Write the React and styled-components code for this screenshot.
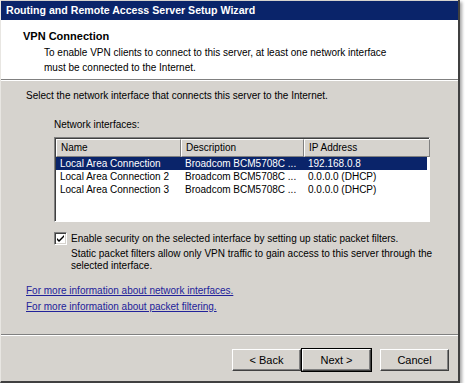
import React from "react";
import styled, { createGlobalStyle } from "styled-components";

const COLORS = {
  titleBar: "#0a246a",
  face: "#d6d3ce",
  shadow: "#808080",
  darkShadow: "#404040",
  highlight: "#ffffff",
  link: "#22229a",
  text: "#000000",
};

const GlobalStyle = createGlobalStyle`
  html, body {
    margin: 0;
    padding: 0;
    background: #ffffff;
  }
  body {
    font-family: "Liberation Sans", Arial, sans-serif;
    font-size: 10px;
    color: ${COLORS.text};
  }
`;

const Window = styled.div`
  width: 460px;
  height: 383px;
  display: flex;
  flex-direction: column;
  background: ${COLORS.face};
  border-left: 1px solid #e8e6e2;
  border-right: 2px solid ${COLORS.darkShadow};
  border-bottom: 2px solid ${COLORS.darkShadow};
  box-shadow: 2px 2px 3px rgba(0, 0, 0, 0.35);
  box-sizing: border-box;
`;

const TitleBar = styled.div`
  height: 19px;
  margin-top: 1px;
  background: ${COLORS.titleBar};
  color: #ffffff;
  font-weight: bold;
  font-size: 10.6px;
  line-height: 19px;
  padding-left: 5px;
`;

const Header = styled.div`
  background: #ffffff;
  height: 60px;
  padding: 9px 0 0 22px;
  box-sizing: border-box;
  border-bottom: 1px solid ${COLORS.shadow};
  box-shadow: 0 1px 0 ${COLORS.highlight};
`;

const HeaderTitle = styled.div`
  font-weight: bold;
  font-size: 11px;
  line-height: 14px;
`;

const HeaderText = styled.div`
  padding-left: 21px;
  margin-top: 2px;
  line-height: 15px;
`;

const Body = styled.div`
  flex: 1;
  display: flex;
  flex-direction: column;
  padding: 9px 0 0 25px;
`;

const Paragraph = styled.div`
  line-height: 13px;
`;

const Section = styled.div`
  margin: 16px 0 0 28px;
`;

const ListBox = styled.div`
  width: 376px;
  height: 85px;
  margin-top: 6px;
  background: #ffffff;
  border-top: 1px solid ${COLORS.shadow};
  border-left: 1px solid ${COLORS.shadow};
  border-right: 1px solid ${COLORS.highlight};
  border-bottom: 1px solid ${COLORS.highlight};
  box-shadow: inset 1px 1px 0 ${COLORS.darkShadow};
  box-sizing: border-box;
  padding: 1px 2px 0 1px;
`;

const Columns = styled.div`
  display: grid;
  grid-template-columns: 125px 123px 126px;
`;

const HeaderCell = styled.div`
  height: 16px;
  line-height: 16px;
  padding-left: 4px;
  background: ${COLORS.face};
  border-top: 1px solid ${COLORS.highlight};
  border-left: 1px solid ${COLORS.highlight};
  border-right: 1px solid ${COLORS.shadow};
  border-bottom: 1px solid ${COLORS.shadow};
`;

const Row = styled.div`
  display: grid;
  grid-template-columns: 125px 123px 126px;
  height: 13px;
  line-height: 13px;
  background: ${(p) => (p.$selected ? COLORS.titleBar : "transparent")};
  color: ${(p) => (p.$selected ? "#ffffff" : COLORS.text)};
`;

const Rows = styled.div`
  margin-top: 0;
`;

const Cell = styled.div`
  padding-left: 4px;
  white-space: nowrap;
  overflow: hidden;
`;

const CheckRow = styled.div`
  display: flex;
  gap: 4px;
  margin-top: 10px;
`;

const CheckBox = styled.div`
  width: 13px;
  height: 13px;
  flex: none;
  box-sizing: border-box;
  background: #ffffff;
  border-top: 1px solid ${COLORS.shadow};
  border-left: 1px solid ${COLORS.shadow};
  border-right: 1px solid ${COLORS.highlight};
  border-bottom: 1px solid ${COLORS.highlight};
  box-shadow: inset 1px 1px 0 ${COLORS.darkShadow}, inset -1px -1px 0 ${COLORS.face};
  display: flex;
  align-items: center;
  justify-content: center;
`;

const CheckText = styled.div`
  line-height: 13px;
`;

const Note = styled.div`
  margin-top: 3px;
  line-height: 12px;
  width: 370px;
`;

const Links = styled.div`
  margin-top: 12px;
  display: flex;
  flex-direction: column;
  gap: 3px;
  align-items: flex-start;
`;

const Link = styled.a`
  color: ${COLORS.link};
  text-decoration: underline;
  line-height: 13px;
  cursor: pointer;
`;

const Footer = styled.div`
  margin-top: auto;
  border-top: 1px solid ${COLORS.shadow};
  box-shadow: inset 0 1px 0 ${COLORS.highlight};
  display: flex;
  justify-content: flex-end;
  padding: 14px 9px 10px 0;
`;

const Button = styled.button`
  width: 69px;
  height: 22px;
  font-family: inherit;
  font-size: 11px;
  color: ${COLORS.text};
  background: ${COLORS.face};
  box-sizing: border-box;
  padding: 0;
  margin-left: ${(p) => p.$gap || 0}px;
  border-top: 1px solid ${COLORS.highlight};
  border-left: 1px solid ${COLORS.highlight};
  border-right: 1px solid ${COLORS.darkShadow};
  border-bottom: 1px solid ${COLORS.darkShadow};
  box-shadow: inset -1px -1px 0 ${COLORS.shadow};
  outline: ${(p) => (p.$default ? `1px solid ${COLORS.text}` : "none")};
`;

const interfaces = [
  { name: "Local Area Connection", desc: "Broadcom BCM5708C ...", ip: "192.168.0.8" },
  { name: "Local Area Connection 2", desc: "Broadcom BCM5708C ...", ip: "0.0.0.0 (DHCP)" },
  { name: "Local Area Connection 3", desc: "Broadcom BCM5708C ...", ip: "0.0.0.0 (DHCP)" },
];

function CheckMark() {
  return (
    <svg width="9" height="9" viewBox="0 0 9 9">
      <path d="M1 4 L3 6 L8 1 L8 3 L3 8 L1 6 Z" fill="#000" />
    </svg>
  );
}

export default function App() {
  return (
    <>
      <GlobalStyle />
      <Window>
        <TitleBar>Routing and Remote Access Server Setup Wizard</TitleBar>
        <Header>
          <HeaderTitle>VPN Connection</HeaderTitle>
          <HeaderText>
            To enable VPN clients to connect to this server, at least one network interface
            <br />
            must be connected to the Internet.
          </HeaderText>
        </Header>
        <Body>
          <Paragraph>Select the network interface that connects this server to the Internet.</Paragraph>
          <Section>
            <Paragraph>Network interfaces:</Paragraph>
            <ListBox>
              <Columns>
                <HeaderCell>Name</HeaderCell>
                <HeaderCell>Description</HeaderCell>
                <HeaderCell>IP Address</HeaderCell>
              </Columns>
              <Rows>
                {interfaces.map((it, i) => (
                  <Row key={it.name} $selected={i === 0}>
                    <Cell>{it.name}</Cell>
                    <Cell>{it.desc}</Cell>
                    <Cell>{it.ip}</Cell>
                  </Row>
                ))}
              </Rows>
            </ListBox>
            <CheckRow>
              <CheckBox>
                <CheckMark />
              </CheckBox>
              <div>
                <CheckText>Enable security on the selected interface by setting up static packet filters.</CheckText>
                <Note>
                  Static packet filters allow only VPN traffic to gain access to this server through the
                  selected interface.
                </Note>
              </div>
            </CheckRow>
          </Section>
          <Links>
            <Link>For more information about network interfaces.</Link>
            <Link>For more information about packet filtering.</Link>
          </Links>
        </Body>
        <Footer>
          <Button>&lt; Back</Button>
          <Button $gap={1} $default>Next &gt;</Button>
          <Button $gap={9}>Cancel</Button>
        </Footer>
      </Window>
    </>
  );
}
